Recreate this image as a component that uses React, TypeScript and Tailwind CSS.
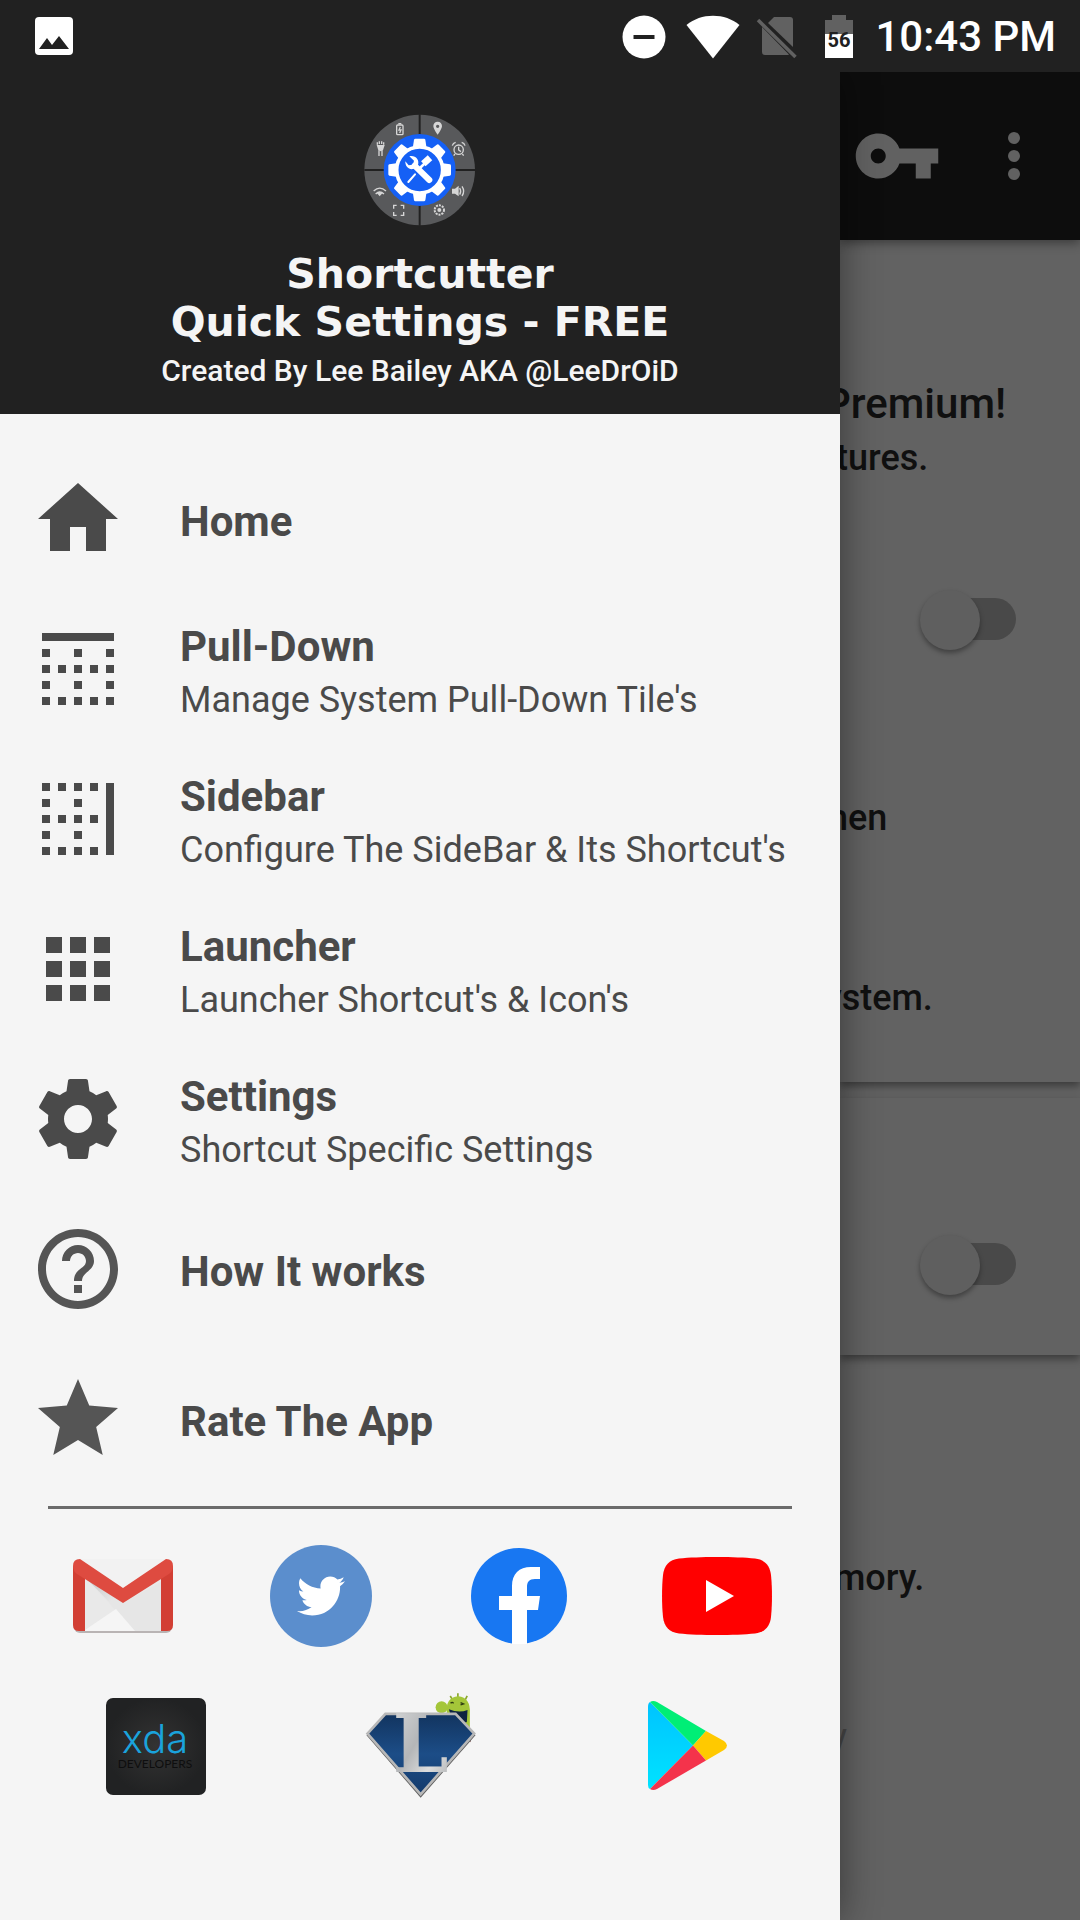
import { ReactNode } from "react";
import { FaTwitter } from "react-icons/fa";

const GEAR_PATH =
  "M19.43 12.98c.04-.32.07-.64.07-.98s-.03-.66-.07-.98l2.11-1.65c.19-.15.24-.42.12-.64l-2-3.46c-.12-.22-.39-.3-.61-.22l-2.49 1c-.52-.4-1.08-.73-1.69-.98l-.38-2.65C14.46 2.18 14.25 2 14 2h-4c-.25 0-.46.18-.49.42l-.38 2.65c-.61.25-1.17.59-1.69.98l-2.49-1c-.23-.09-.49 0-.61.22l-2 3.46c-.13.22-.07.49.12.64l2.11 1.65c-.04.32-.07.65-.07.98s.03.66.07.98l-2.11 1.65c-.19.15-.24.42-.12.64l2 3.46c.12.22.39.3.61.22l2.49-1c.52.4 1.08.73 1.69.98l.38 2.65c.03.24.24.42.49.42h4c.25 0 .46-.18.49-.42l.38-2.65c.61-.25 1.17-.59 1.69-.98l2.49 1c.23.09.49 0 .61-.22l2-3.46c.12-.22.07-.49-.12-.64l-2.11-1.65zM12 15.5c-1.93 0-3.5-1.57-3.5-3.5s1.57-3.5 3.5-3.5 3.5 1.57 3.5 3.5-1.57 3.5-3.5 3.5z";

type MenuItem = {
  title: string;
  subtitle?: string;
  path: string;
  color: string;
};

const menuItems: MenuItem[] = [
  { title: "Home", path: "M10 20v-6h4v6h5v-8h3L12 3 2 12h3v8z", color: "text-[#4a4a4a]" },
  {
    title: "Pull-Down",
    subtitle: "Manage System Pull-Down Tile's",
    path: "M3 3h18v2H3zM3 7h2v2H3zM11 7h2v2h-2zM19 7h2v2h-2zM3 11h2v2H3zM7 11h2v2H7zM11 11h2v2h-2zM15 11h2v2h-2zM19 11h2v2h-2zM3 15h2v2H3zM11 15h2v2h-2zM19 15h2v2h-2zM3 19h2v2H3zM7 19h2v2H7zM11 19h2v2h-2zM15 19h2v2h-2zM19 19h2v2h-2z",
    color: "text-[#4a4a4a]",
  },
  {
    title: "Sidebar",
    subtitle: "Configure The SideBar & Its Shortcut's",
    path: "M19 3h2v18h-2zM3 3h2v2H3zM7 3h2v2H7zM11 3h2v2h-2zM15 3h2v2h-2zM3 7h2v2H3zM11 7h2v2h-2zM3 11h2v2H3zM7 11h2v2H7zM11 11h2v2h-2zM15 11h2v2h-2zM3 15h2v2H3zM11 15h2v2h-2zM3 19h2v2H3zM7 19h2v2H7zM11 19h2v2h-2zM15 19h2v2h-2z",
    color: "text-[#4a4a4a]",
  },
  {
    title: "Launcher",
    subtitle: "Launcher Shortcut's & Icon's",
    path: "M4 8h4V4H4v4zm6 12h4v-4h-4v4zm-6 0h4v-4H4v4zm0-6h4v-4H4v4zm6 0h4v-4h-4v4zm6-10v4h4V4h-4zm-6 4h4V4h-4v4zm6 6h4v-4h-4v4zm0 6h4v-4h-4v4z",
    color: "text-[#4a4a4a]",
  },
  { title: "Settings", subtitle: "Shortcut Specific Settings", path: GEAR_PATH, color: "text-[#4a4a4a]" },
  {
    title: "How It works",
    path: "M11 18h2v-2h-2v2zm1-16C6.48 2 2 6.48 2 12s4.480 10 10 10 10-4.480 10-10S17.520 2 12 2zm0 18c-4.410 0-8-3.590-8-8s3.590-8 8-8 8 3.590 8 8-3.590 8-8 8zm0-14c-2.210 0-4 1.790-4 4h2c0-1.100.9-2 2-2s2 .9 2 2c0 2-3 1.750-3 5h2c0-2.250 3-2.500 3-5 0-2.210-1.790-4-4-4z",
    color: "text-[#555555]",
  },
  {
    title: "Rate The App",
    path: "M12 17.270L18.180 21l-1.640-7.030L22 9.240l-7.190-.61L12 2 9.190 8.630 2 9.240l5.460 4.730L5.820 21z",
    color: "text-[#555555]",
  },
];

function StatusBar() {
  return (
    <header className="relative z-20 flex h-[72px] items-center bg-[#212121] pl-[35px] pr-6 text-white">
      <svg viewBox="0 0 38 38" className="h-[38px] w-[38px]">
        <rect width="38" height="38" rx="4" fill="#fff" />
        <path d="M4 32 12 21l5 7 7-9 10 13z" fill="#212121" />
      </svg>
      <div className="ml-auto flex items-center pt-0.5">
        <svg viewBox="0 0 44 44" className="h-11 w-11">
          <circle cx="22" cy="22" r="21.500" fill="#fff" />
          <path d="M11.500 20h21v4h-21z" fill="#212121" />
        </svg>
        <svg viewBox="0 0 54 44" className="ml-5 h-11 w-[54px]">
          <path d="M27 43.500.5 10C8 4 17 .8 27 .8S46 4 53.500 10z" fill="#fff" />
        </svg>
        <svg viewBox="0 0 42 44" className="ml-4 h-11 w-[42px]">
          <path d="M12 8 18 2h16q3 0 3 3v27z" fill="#616161" />
          <path d="M6 12 33 39.500 32 40H9q-3 0-3-3z" fill="#616161" />
          <path d="M2 5 39.500 42" stroke="#616161" strokeWidth="3.500" />
        </svg>
        <svg viewBox="0 0 28 44" className="ml-[27px] h-11 w-7">
          <path d="M7 0h14v5h7v14H0V5h7z" fill="#616161" />
          <path d="M0 19h28v24H0z" fill="#fff" />
          <text
            x="14"
            y="32"
            textAnchor="middle"
            className="font-['Roboto',sans-serif] text-[20px] font-bold"
            fill="#212121"
          >
            56
          </text>
        </svg>
        <span className="ml-[22px] font-medium text-[42px] leading-[48px]">10:43 PM</span>
      </div>
    </header>
  );
}

function AppLogo() {
  return (
    <svg viewBox="44 41 336 336" className="h-28 w-28">
      <circle cx="211" cy="209" r="166" fill="#58595b" />
      <path d="M211 42v334M45 209h332" stroke="#212121" strokeWidth="6" />
      <circle cx="211" cy="209" r="108" fill="#1560f5" />
      <g fill="#fff">
        {[0, 45, 90, 135, 180, 225, 270, 315].map((angle) => (
          <path
            key={angle}
            d="M190 145 194 118q1-3 4-3h26q3 0 4 3l4 27z"
            transform={`rotate(${angle} 211 209)`}
          />
        ))}
      </g>
      <circle cx="211" cy="209" r="69" fill="#1560f5" stroke="#fff" strokeWidth="11" />
      <path d="m196 196 44 43" stroke="#fff" strokeWidth="18" strokeLinecap="round" />
      <path d="M180 168l14 13-3 12-13 2-10-12c-1 15 10 26 24 23l14-12c5-16-8-30-26-26z" fill="#fff" />
      <path d="m212 203 14-14" stroke="#fff" strokeWidth="8" />
      <path d="m222 190 20-18" stroke="#fff" strokeWidth="20" />
      <path d="m197 222-20 23" stroke="#fff" strokeWidth="6" strokeLinecap="round" />
      <g fill="none" stroke="#d6d6d6" strokeWidth="4">
        <rect x="142" y="74" width="19" height="29" rx="3" />
        <path d="M147 70h9M153 80l-4 9h6l-4 9" />
        <circle cx="328" cy="148" r="14" />
        <path d="M328 139v10l7 5M309 136q2-8 10-10M347 136q-2-8-10-10M317 161l-4 5M339 161l4 5" />
        <path d="M73 272q18-17 37 0M79 281q12-12 25 0" />
        <path d="M133 325v-10h9M154 315h9v10M163 335v10h-9M142 345h-9v-10" />
        <path d="M331 263q6 10 0 20M338 258q10 15 0 29" />
        <circle cx="270" cy="329" r="14" strokeDasharray="6 3" strokeWidth="6" />
        <path d="M89 150v17M98 150v17M84 126v7M90 123v8M97 123v8M103 126v7" />
      </g>
      <g fill="#d6d6d6">
        <path d="M265 64c-8 0-13 6-13 13 0 9 13 26 13 26s13-17 13-26c0-7-5-13-13-13zm0 9a5 5 0 1 1 0 10 5 5 0 0 1 0-10z" />
        <path d="M82 134h24l-5 16q-7 5-14 0z" />
        <path d="m83 279 8-5 8 5-8 9z" />
        <path d="M308 265h9l11-9v32l-11-8h-9z" />
        <circle cx="270" cy="329" r="6" />
      </g>
    </svg>
  );
}

function GmailLogo() {
  return (
    <svg viewBox="0 0 100 76" className="h-[76px] w-[100px]">
      <defs>
        <linearGradient id="flap" x1="0" y1="0" x2="1" y2="1">
          <stop offset="0" stopColor="#c4c4c4" />
          <stop offset="0.700" stopColor="#e6e6e6" />
        </linearGradient>
      </defs>
      <rect x="1" y="2" width="98" height="73" rx="6" fill="#b9b4b4" />
      <rect y="1" width="100" height="72" rx="6" fill="#e9e9e9" />
      <path d="M12 19 62 73H88V24L50 45z" fill="#e6e6e6" />
      <path d="M12 19 43 51l10-6z" fill="url(#flap)" />
      <path d="M12 72 43 51l19 22H12z" fill="#f5f5f5" />
      <path d="M6 1h88L50 31z" fill="#f2f2f2" />
      <path d="M0 8 12 14v59H6q-6 0-6-6zM100 8 88 14v59h6q6 0 6-6z" fill="#d23f34" />
      <path d="M0 8Q0 1 7 1L50 30 93 1q7 0 7 7 0 5-4 8L50 45 4 16Q0 13 0 8z" fill="#de4b40" />
    </svg>
  );
}

function TwitterLogo() {
  return (
    <span className="flex h-[102px] w-[102px] items-center justify-center rounded-full bg-[#5b8ecd]">
      <FaTwitter className="h-12 w-12 text-white" />
    </span>
  );
}

function FacebookLogo() {
  return (
    <svg viewBox="0 0 96 96" className="h-24 w-24">
      <circle cx="48" cy="48" r="48" fill="#1877f2" />
      <path
        d="M41 96V62H28V48h13V38c0-12 7-19 19-19h9v12h-5c-6 0-8 3-8 8v9h13l-2 14H56v34z"
        fill="#fff"
      />
    </svg>
  );
}

function YoutubeLogo() {
  return (
    <svg viewBox="0 0 110 78" className="h-[78px] w-[110px]">
      <path
        d="M55 0c15 0 28 .5 38 1.500C103 2.500 108 9 109 18c1.300 13 1.300 29 0 42-1 9-6 15.500-16 16.500-20 2-56 2-76 0C7 75.500 2 69 1 60-.3 47-.3 31 1 18 2 9 7 2.500 17 1.500 27 .5 40 0 55 0z"
        fill="#f00"
      />
      <path d="M44 23v32l28-16z" fill="#fff" />
    </svg>
  );
}

function XdaLogo() {
  return (
    <svg viewBox="0 0 100 97" className="h-[97px] w-[100px]">
      <defs>
        <radialGradient id="slate">
          <stop offset="0" stopColor="#333333" />
          <stop offset="1" stopColor="#212223" />
        </radialGradient>
      </defs>
      <rect width="100" height="97" rx="7" fill="url(#slate)" />
      <text
        x="49"
        y="55"
        textAnchor="middle"
        fill="#1aa3dc"
        className="font-['Inter',sans-serif] text-[40px] font-light"
      >
        xda
      </text>
      <text
        x="49"
        y="70"
        textAnchor="middle"
        fill="#0e0e0e"
        className="font-['Lato',sans-serif] text-[12px]"
      >
        DEVELOPERS
      </text>
    </svg>
  );
}

function LeeDroidLogo() {
  return (
    <svg viewBox="40 30 345 325" className="h-[108px] w-[115px]">
      <defs>
        <linearGradient id="steel" x1="0" y1="0" x2="1" y2="1">
          <stop offset="0" stopColor="#d9dadb" />
          <stop offset="0.450" stopColor="#b4b6b8" />
          <stop offset="0.700" stopColor="#dcdddd" />
          <stop offset="1" stopColor="#a9abad" />
        </linearGradient>
        <linearGradient id="navy" x1="0" y1="0" x2="0" y2="1">
          <stop offset="0" stopColor="#12345f" />
          <stop offset="0.500" stopColor="#1c4d87" />
          <stop offset="1" stopColor="#133a6b" />
        </linearGradient>
      </defs>
      <path d="M302 42l6 10M325 34v14M353 42l-6 12" stroke="#8aa62c" strokeWidth="5" />
      <path d="M292 95q-6-48 34-52 38 4 35 52v42l-18 8-24-44z" fill="#a4c639" />
      <circle cx="276" cy="76" r="18" fill="#a4c639" />
      <path d="M298 82q30 12 56 2l-2 36-16 6-34-30z" fill="#0e2440" />
      <path d="M303 64q5-6 9 0M333 62l9 4-9 3" fill="none" stroke="#2e3d12" strokeWidth="4" />
      <path d="m345 165 18-12v28z" fill="#5a2320" />
      <path d="M50 160 105 99h215l58 61-165 188z" fill="#5d5d5d" />
      <path d="M53 155 107 96h211l56 59-161 183z" fill="url(#navy)" stroke="#b8b8b8" strokeWidth="8" />
      <text
        x="213"
        y="271"
        textAnchor="middle"
        fill="url(#steel)"
        className="font-['DejaVu_Serif',serif] text-[240px] font-bold"
      >
        L
      </text>
    </svg>
  );
}

function PlayStoreLogo() {
  return (
    <svg viewBox="-8 0 88 90" className="h-[90px] w-[88px]">
      <defs>
        <linearGradient id="sky" x1="0" y1="0" x2="0" y2="1">
          <stop offset="0" stopColor="#00c3ff" />
          <stop offset="1" stopColor="#00e3ff" />
        </linearGradient>
      </defs>
      <path d="M2 1Q0 2 0 6v78q0 3 2 4l43-43.500z" fill="url(#sky)" />
      <path d="M2 1q3-2 7 0l49 29-13 14.500z" fill="#00ee76" />
      <path d="m58 30 18 10q6 4.500 0 9L58 59.500 45 44.500z" fill="#ffc900" />
      <path d="M2 88q3 2 7 0l49-28.500-13-15z" fill="#f4334b" />
    </svg>
  );
}

function SocialLink({ label, children }: { label: string; children: ReactNode }) {
  return (
    <a href="#" aria-label={label} className="flex h-[150px] items-center justify-center">
      {children}
    </a>
  );
}

function Drawer() {
  return (
    <aside className="relative z-10 w-7/9 shrink-0 bg-[#f5f5f5] shadow-[0_0_36px_rgba(0,0,0,0.45)]">
      <div className="flex flex-col items-center bg-[#212121] pb-[23px] pt-[42px] text-center text-[#f5f5f5]">
        <AppLogo />
        <h1 className="mt-6 font-['DejaVu_Sans',sans-serif] text-[41px] font-bold leading-[48px]">
          Shortcutter
          <br />
          Quick Settings - FREE
        </h1>
        <p className="mt-[5px] text-[30px] font-medium leading-[40px]">
          Created By Lee Bailey AKA @LeeDrOiD
        </p>
      </div>

      <nav className="pt-[30px]">
        {menuItems.map((item) => (
          <a key={item.title} href="#" className="flex h-[150px] items-center pl-[30px] text-[#4a4a4a]">
            <svg viewBox="0 0 24 24" fill="currentColor" className={`h-24 w-24 shrink-0 ${item.color}`}>
              <path d={item.path} />
            </svg>
            <span className="ml-[54px] flex flex-col whitespace-nowrap pt-1.5">
              <span className="text-[42px] font-bold leading-[56px]">{item.title}</span>
              {item.subtitle && (
                <span className="text-[36px] leading-[50px]">{item.subtitle}</span>
              )}
            </span>
          </a>
        ))}
      </nav>

      <hr className="mx-12 mt-3 border-t-[3px] border-[#6b6b6b]" />

      <div className="grid grid-cols-4 px-6 pt-3">
        <SocialLink label="Gmail">
          <GmailLogo />
        </SocialLink>
        <SocialLink label="Twitter">
          <TwitterLogo />
        </SocialLink>
        <SocialLink label="Facebook">
          <FacebookLogo />
        </SocialLink>
        <SocialLink label="YouTube">
          <YoutubeLogo />
        </SocialLink>
      </div>
      <div className="grid grid-cols-3 px-6">
        <SocialLink label="XDA Developers">
          <XdaLogo />
        </SocialLink>
        <SocialLink label="LeeDrOiD">
          <LeeDroidLogo />
        </SocialLink>
        <SocialLink label="Google Play">
          <PlayStoreLogo />
        </SocialLink>
      </div>
    </aside>
  );
}

function Toggle({ label }: { label: string }) {
  return (
    <input
      type="checkbox"
      role="switch"
      aria-label={label}
      className="relative mr-16 block h-[42px] w-[90px] appearance-none self-end rounded-full bg-[#494949] before:absolute before:-left-1.5 before:-top-2 before:h-[60px] before:w-[60px] before:rounded-full before:bg-[#5f5f5f] before:shadow-[0_3px_5px_rgba(0,0,0,0.35)]"
    />
  );
}

// Page behind the open drawer, already dimmed
function Page() {
  return (
    <main className="flex min-w-0 flex-1 flex-col overflow-hidden whitespace-nowrap bg-[#626262] text-[36px] font-medium leading-[48px] text-[#101010]">
      <div className="relative flex h-[168px] shrink-0 items-center justify-end gap-9 bg-[#0d0d0d] pr-[30px] text-[#616161] shadow-[0_3px_10px_rgba(0,0,0,0.4)]">
        <button aria-label="Key">
          <svg viewBox="0 0 24 24" fill="currentColor" className="h-[90px] w-[90px]">
            <path d="M12.650 10C11.830 7.670 9.610 6 7 6c-3.310 0-6 2.690-6 6s2.690 6 6 6c2.610 0 4.830-1.670 5.650-4H17v4h4v-4h2v-4H12.650zM7 14c-1.100 0-2-.9-2-2s.9-2 2-2 2 .9 2 2-.9 2-2 2z" />
          </svg>
        </button>
        <button aria-label="More">
          <svg viewBox="0 0 24 24" fill="currentColor" className="h-[72px] w-[72px]">
            <circle cx="12" cy="6" r="2" />
            <circle cx="12" cy="12" r="2" />
            <circle cx="12" cy="18" r="2" />
          </svg>
        </button>
      </div>

      <section className="flex flex-col pb-[60px] pt-[139px] shadow-[0_4px_8px_rgba(0,0,0,0.4)]">
        <h2 className="-ml-4 text-[42px] leading-[50px]">Premium!</h2>
        <p className="-ml-1 mb-[116px] mt-[5px]">tures.</p>
        <Toggle label="Premium" />
        <p className="-ml-3 mt-[154px]">hen</p>
        <p className="-ml-4 mt-[132px]">ystem.</p>
      </section>

      <section className="mt-4 flex flex-col pb-[70px] pt-[145px] shadow-[0_4px_8px_rgba(0,0,0,0.4)]">
        <Toggle label="Service" />
      </section>

      <section className="flex flex-col pt-[199px]">
        <p className="-ml-1.5">mory.</p>
        <p className="-ml-2.5 mt-[111px] font-normal text-[#484848]">y</p>
      </section>
    </main>
  );
}

export default function App() {
  return (
    <div className="flex min-h-screen flex-col bg-[#626262] font-['Roboto',sans-serif]">
      <StatusBar />
      <div className="flex flex-1">
        <Drawer />
        <Page />
      </div>
    </div>
  );
}
